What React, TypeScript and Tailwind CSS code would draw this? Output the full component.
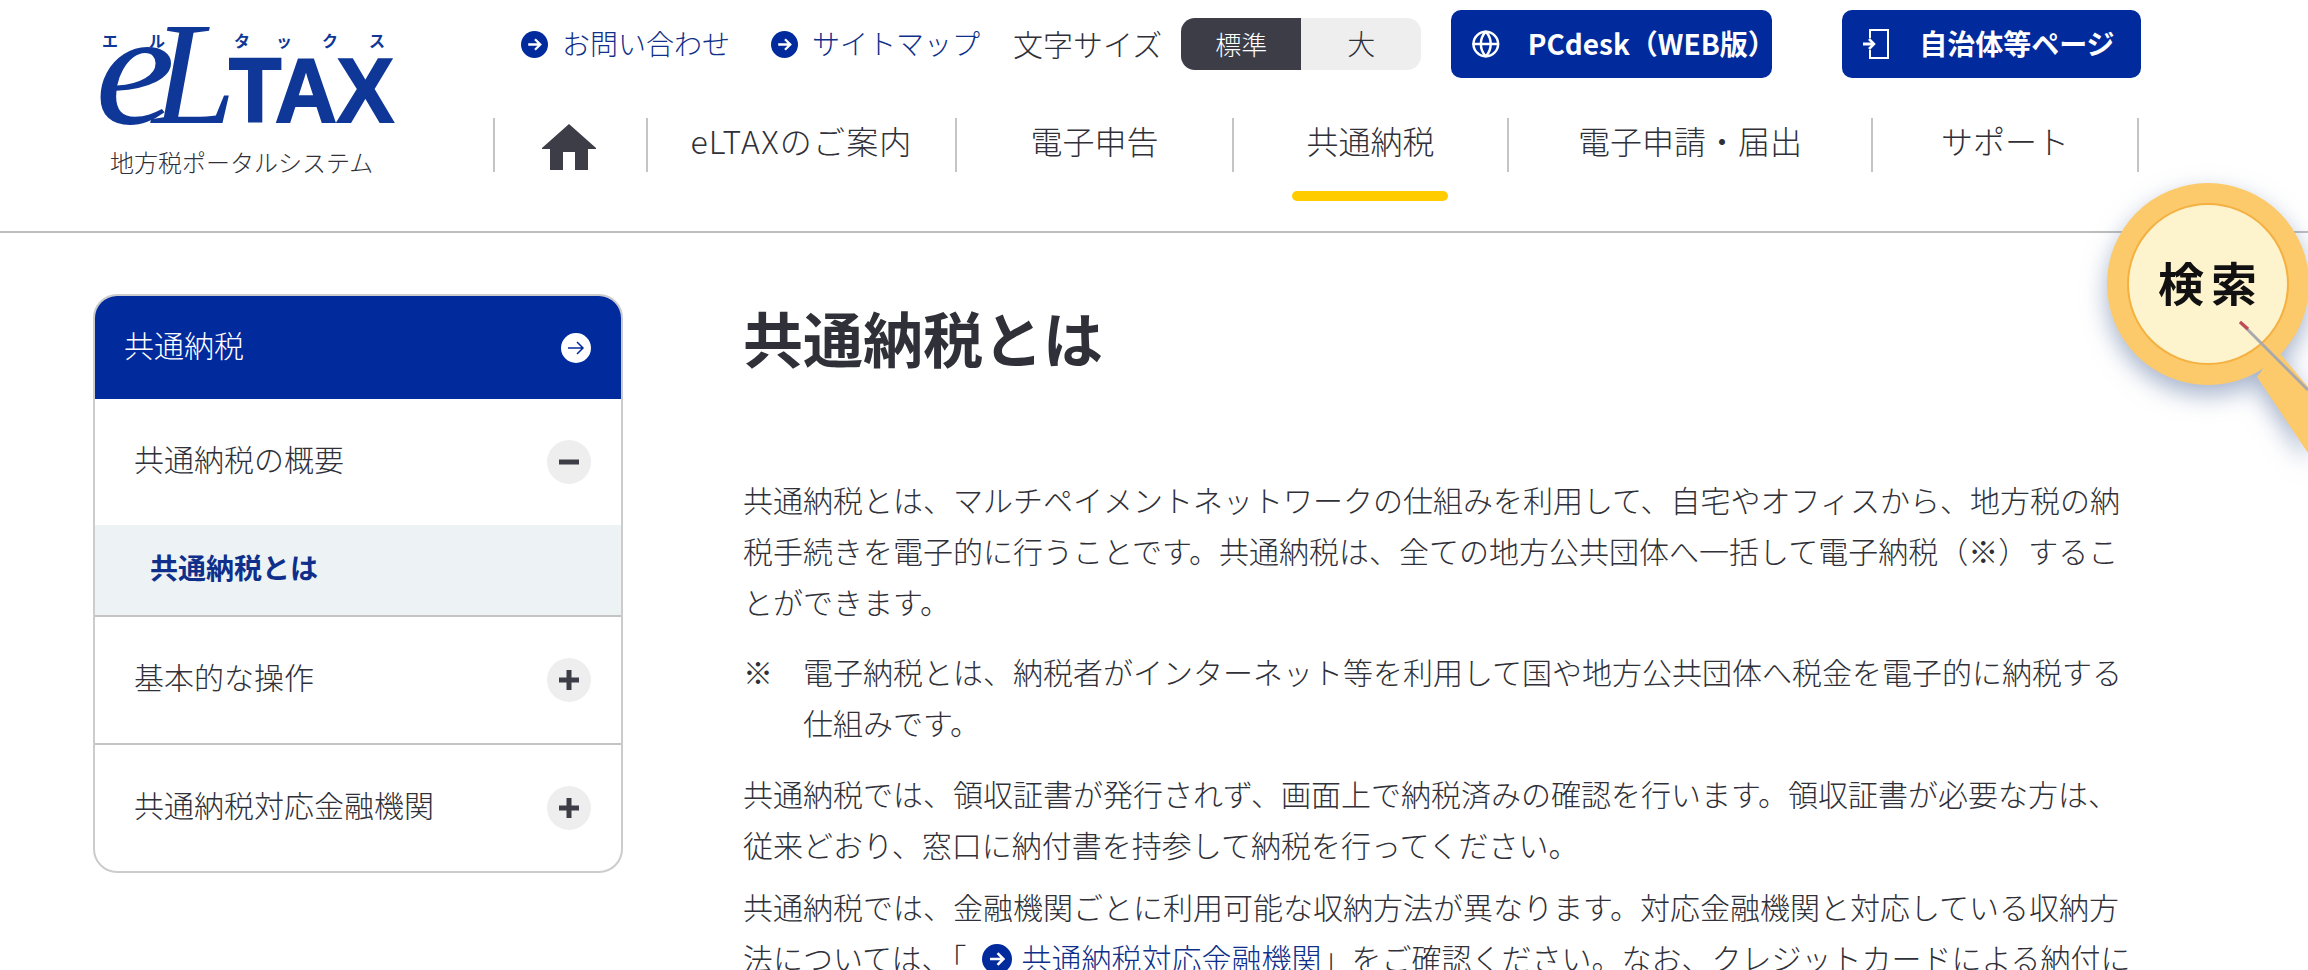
import { Globe } from "lucide-react";

function ArrowDot({ className }: { className: string }) {
  return (
    <svg viewBox="0 0 28 28" className={className}>
      <circle cx="14" cy="14" r="14" fill="#012a9c" />
      <path d="M7.5 14H20M14.5 8.5 20 14l-5.5 5.5" fill="none" stroke="#fff" strokeWidth="2.4" />
    </svg>
  );
}

function Logo() {
  return (
    <svg viewBox="98 25 296 100" className="h-[100px] w-[296px] overflow-visible" fill="#0f3797">
      <text x="102" y="47" fontSize="16" fontWeight="700">エ</text>
      <text x="149" y="47" fontSize="16" fontWeight="700">ル</text>
      <text x="234" y="47" fontSize="16" fontWeight="700">タ</text>
      <text x="276" y="47" fontSize="16" fontWeight="700">ッ</text>
      <text x="322" y="47" fontSize="16" fontWeight="700">ク</text>
      <text x="369" y="47" fontSize="16" fontWeight="700">ス</text>
      <text x="95" y="123" fontSize="160" fontStyle="italic" fontFamily="'Liberation Serif', serif" textLength="80" lengthAdjust="spacingAndGlyphs">e</text>
      <text x="152" y="123" fontSize="146" fontStyle="italic" fontFamily="'Liberation Serif', serif" textLength="84" lengthAdjust="spacingAndGlyphs">L</text>
      <text x="229" y="122" fontSize="90" fontWeight="700" fontFamily="'Liberation Sans', sans-serif" textLength="165" lengthAdjust="spacingAndGlyphs" stroke="#0f3797" strokeWidth="2">TAX</text>
    </svg>
  );
}

function NavCell({ label, width, active }: { label: string; width: string; active?: boolean }) {
  return (
    <div className={`relative flex h-[54px] items-center justify-center border-l-2 border-[#c4c4c4] pb-[10px] ${width}`}>
      {label}
      {active && <span className="absolute left-[58px] top-[73px] h-[10px] w-[156px] rounded-full bg-[#ffcc00]" />}
    </div>
  );
}

function SideItem({ label, open }: { label: string; open?: boolean }) {
  return (
    <div className="flex h-[126px] items-center justify-between pl-[39px] pr-[30px]">
      <span className="mb-[8px]">{label}</span>
      <span className="flex h-[44px] w-[44px] items-center justify-center rounded-full bg-[#eeeeee]">
        <svg viewBox="0 0 20 20" className="h-5 w-5">
          <path d={open ? "M0 10h20" : "M0 10h20M10 0v20"} stroke="#3c3d47" strokeWidth="5" fill="none" />
        </svg>
      </span>
    </div>
  );
}

function SearchGlass() {
  return (
    <svg viewBox="2090 170 218 300" className="absolute left-[2090px] top-[170px] h-[300px] w-[218px] drop-shadow-[0_10px_12px_rgba(90,115,160,0.55)]">
      <path d="M2277 350 2308 387V453L2257 377Z" fill="#fcca6a" />
      <circle cx="2208" cy="284" r="101" fill="#fcca6a" />
      <circle cx="2208" cy="284" r="80" fill="#fdf3cd" stroke="#f5b042" strokeWidth="2" />
      <text x="2158" y="301" fontSize="46" fontWeight="700" fill="#111" letterSpacing="7">検索</text>
      <path d="M2240 322 2308 390" stroke="#a9a9ad" strokeWidth="3" />
      <path d="M2240 322 2248 329" stroke="#c04a55" strokeWidth="3" />
    </svg>
  );
}

export default function App() {
  return (
    <div className="relative h-[970px] w-[2308px] overflow-hidden bg-white font-['Noto_Sans_CJK_JP',sans-serif] text-[30px] font-light leading-[51px] text-[#2f3038]">
      {/* Header */}
      <header className="flex h-[233px] border-b-2 border-[#bdbdbd]">
        <div className="w-[493px] pl-[98px] pt-[25px]">
          <Logo />
          <p className="ml-[12px] mt-[22px] text-[24px] leading-[30px]">地方税ポータルシステム</p>
        </div>
        <div>
          <div className="mt-[10px] flex h-[68px] items-center pl-[28px] text-[28px]">
            <ArrowDot className="h-[27px] w-[27px]" />
            <a className="mb-[2px] ml-[14px] text-[#0f2f8a]">お問い合わせ</a>
            <ArrowDot className="ml-[41px] h-[27px] w-[27px]" />
            <a className="mb-[2px] ml-[14px] text-[#0f2f8a]">サイトマップ</a>
            <span className="mb-[2px] ml-[33px] text-[30px]">文字サイズ</span>
            <div className="ml-[19px] flex h-[52px] w-[240px] overflow-hidden rounded-[14px] bg-[#eeeeee] text-[26px]">
              <span className="flex w-[120px] items-center justify-center bg-[#3c3d47] pb-[2px] text-white">標準</span>
              <span className="flex w-[120px] items-center justify-center pb-[2px] text-[28px]">大</span>
            </div>
            <button className="ml-[30px] flex h-[68px] w-[321px] items-center rounded-[10px] bg-[#012a9c] pl-[20px] font-bold text-white">
              <Globe className="h-[30px] w-[30px]" strokeWidth={2} />
              <span className="mb-[2px] ml-[27px]">PCdesk（WEB版）</span>
            </button>
            <button className="ml-[70px] flex h-[68px] w-[299px] items-center rounded-[10px] bg-[#012a9c] pl-[20px] font-bold text-white">
              <svg viewBox="0 0 27 30" className="h-[30px] w-[27px]" fill="none" stroke="#fff" strokeWidth="2">
                <path d="M8 9V1h18v28H8v-8" />
                <path d="M1 15h11" strokeWidth="3" />
                <path d="M7 10l5 5-5 5" strokeWidth="2.5" />
              </svg>
              <span className="mb-[2px] ml-[30px]">自治体等ページ</span>
            </button>
          </div>
          <nav className="mt-[40px] flex text-[32px]">
            <NavCell label="" width="w-[153px]" />
            <NavCell label="eLTAXのご案内" width="w-[309px] tracking-[1.2px]" />
            <NavCell label="電子申告" width="w-[277px]" />
            <NavCell label="共通納税" width="w-[275px]" active />
            <NavCell label="電子申請・届出" width="w-[364px]" />
            <NavCell label="サポート" width="w-[268px] border-r-2" />
          </nav>
        </div>
      </header>

      {/* Home icon sits over the first nav cell */}
      <svg viewBox="0 0 54 46" className="absolute left-[542px] top-[124px] h-[46px] w-[54px]" fill="#3c3d47">
        <path d="M27 0 54 24v1h-8v21H33V28H21v18H8V25H0v-1Z" />
      </svg>

      <main className="flex items-start pl-[93px]">
        {/* Side menu */}
        <aside className="mt-[61px] w-[530px] shrink-0 overflow-hidden rounded-[24px] border-2 border-[#cccccc]">
          <div className="flex h-[103px] items-center justify-between bg-[#012a9c] pl-[29px] pr-[30px] text-white">
            <span className="mb-[6px]">共通納税</span>
            <span className="flex h-[30px] w-[30px] items-center justify-center rounded-full bg-white">
              <svg viewBox="0 0 20 20" className="h-5 w-5" fill="none" stroke="#012a9c" strokeWidth="1.5">
                <path d="M2 10h15M11 4l6 6-6 6" />
              </svg>
            </span>
          </div>
          <SideItem label="共通納税の概要" open />
          <div className="flex h-[92px] items-center border-b-2 border-[#c4c4c4] bg-[#edf3f4] pb-[6px] pl-[55px] text-[28px] font-bold text-[#0f2f8a]">
            共通納税とは
          </div>
          <SideItem label="基本的な操作" />
          <div className="border-t-2 border-[#c4c4c4]">
            <SideItem label="共通納税対応金融機関" />
          </div>
        </aside>

        {/* Article */}
        <article className="ml-[120px] w-[1400px] shrink-0">
          <h1 className="mt-[64px] text-[60px] font-bold leading-[80px]">共通納税とは</h1>
          <p className="mt-[97px]">
            共通納税とは、マルチペイメントネットワークの仕組みを利用して、自宅やオフィスから、地方税の納税手続きを電子的に行うことです。共通納税は、全ての地方公共団体へ一括して電子納税（※）することができます。
          </p>
          <div className="mt-[19px] flex">
            <span className="w-[60px] shrink-0">※</span>
            <p className="w-[1380px]">電子納税とは、納税者がインターネット等を利用して国や地方公共団体へ税金を電子的に納税する仕組みです。</p>
          </div>
          <p className="mt-[20px]">
            共通納税では、領収証書が発行されず、画面上で納税済みの確認を行います。領収証書が必要な方は、従来どおり、窓口に納付書を持参して納税を行ってください。
          </p>
          <p className="mt-[11px]">
            共通納税では、金融機関ごとに利用可能な収納方法が異なります。対応金融機関と対応している収納方法については、「
            <ArrowDot className="ml-[15px] mr-[10px] inline-block h-[30px] w-[30px] align-[-4px]" />
            <a className="text-[#0f2f8a] underline">共通納税対応金融機関</a>」をご確認ください。なお、クレジットカードによる納付に
          </p>
        </article>
      </main>

      <SearchGlass />
    </div>
  );
}
